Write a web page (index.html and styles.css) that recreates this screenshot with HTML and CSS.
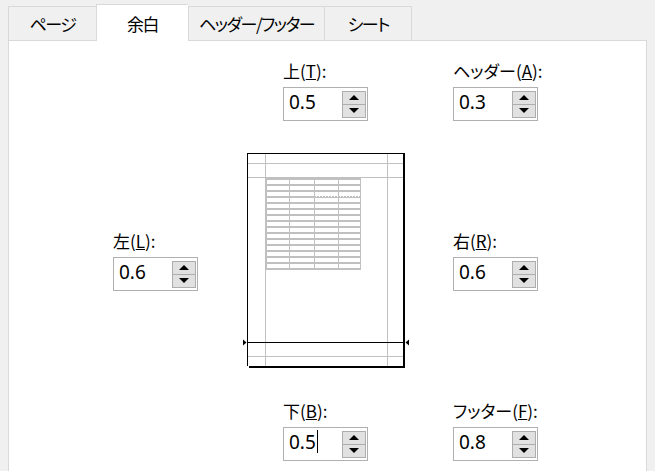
FILE: index.html
```html
<!DOCTYPE html>
<html lang="ja">
<head>
    <meta charset="UTF-8">
    <title>ページ設定 - 余白</title>
    <link rel="stylesheet" href="styles.css">
</head>
<body>
    <div class="tabs">
        <div class="tab">ページ</div>
        <div class="tab active">余白</div>
        <div class="tab">ヘッダー/フッター</div>
        <div class="tab">シート</div>
    </div>

    <div class="panel">
        <div class="margins">
            <div class="field f-top">
                <label class="cap">上(<u>T</u>):</label>
                <div class="spin">
                    <span class="val">0.5</span>
                    <span class="btns"><span class="btn up"></span><span class="btn down"></span></span>
                </div>
            </div>

            <div class="field f-header">
                <label class="cap">ヘッダー(<u>A</u>):</label>
                <div class="spin">
                    <span class="val">0.3</span>
                    <span class="btns"><span class="btn up"></span><span class="btn down"></span></span>
                </div>
            </div>

            <div class="field f-left">
                <label class="cap">左(<u>L</u>):</label>
                <div class="spin">
                    <span class="val">0.6</span>
                    <span class="btns"><span class="btn up"></span><span class="btn down"></span></span>
                </div>
            </div>

            <!-- page preview: margin guides, sample table, bottom margin highlighted -->
            <svg class="preview" width="172" height="222" viewBox="0 0 172 222">
                <rect x="7" y="3" width="157" height="214" fill="#fff"/>
                <g stroke="#c0c0c0" stroke-width="1">
                    <line x1="25.5" y1="4" x2="25.5" y2="216"/>
                    <line x1="147.5" y1="4" x2="147.5" y2="216"/>
                    <line x1="8" y1="13.5" x2="163" y2="13.5"/>
                    <line x1="8" y1="27.5" x2="163" y2="27.5"/>
                    <line x1="8" y1="206.5" x2="163" y2="206.5"/>
                </g>
                <g fill="#c0c0c0">
                    <rect x="26" y="28" width="95" height="2"/>
                    <rect x="26" y="34" width="95" height="2"/>
                    <rect x="26" y="40" width="95" height="2"/>
                    <rect x="26" y="46" width="95" height="2"/>
                    <rect x="26" y="52" width="95" height="2"/>
                    <rect x="26" y="58" width="95" height="2"/>
                    <rect x="26" y="64" width="95" height="2"/>
                    <rect x="26" y="70" width="95" height="2"/>
                    <rect x="26" y="76" width="95" height="2"/>
                    <rect x="26" y="82" width="95" height="2"/>
                    <rect x="26" y="88" width="95" height="2"/>
                    <rect x="26" y="94" width="95" height="2"/>
                    <rect x="26" y="100" width="95" height="2"/>
                    <rect x="26" y="106" width="95" height="2"/>
                    <rect x="26" y="112" width="95" height="2"/>
                    <rect x="26" y="118" width="95" height="2"/>
                    <rect x="26" y="28" width="1" height="92"/>
                    <rect x="49" y="28" width="1" height="92"/>
                    <rect x="74" y="28" width="1" height="92"/>
                    <rect x="98" y="28" width="1" height="92"/>
                    <rect x="120" y="28" width="1" height="92"/>
                </g>
                <line x1="76" y1="46.5" x2="121" y2="46.5" stroke="#fff" stroke-dasharray="1 2"/>
                <g fill="#000">
                    <rect x="7" y="3" width="1" height="213"/>
                    <rect x="7" y="3" width="158" height="1"/>
                    <rect x="163" y="3" width="2" height="215"/>
                    <rect x="9" y="216" width="156" height="2"/>
                    <rect x="7" y="192" width="158" height="1"/>
                    <polygon points="3,189.5 6.5,192.5 3,195.5"/>
                    <polygon points="169,189.5 165.5,192.5 169,195.5"/>
                </g>
            </svg>

            <div class="field f-right">
                <label class="cap">右(<u>R</u>):</label>
                <div class="spin">
                    <span class="val">0.6</span>
                    <span class="btns"><span class="btn up"></span><span class="btn down"></span></span>
                </div>
            </div>

            <div class="field f-bottom">
                <label class="cap">下(<u>B</u>):</label>
                <div class="spin">
                    <span class="val">0.5</span><span class="caret"></span>
                    <span class="btns"><span class="btn up"></span><span class="btn down"></span></span>
                </div>
            </div>

            <div class="field f-footer">
                <label class="cap">フッター(<u>F</u>):</label>
                <div class="spin">
                    <span class="val">0.8</span>
                    <span class="btns"><span class="btn up"></span><span class="btn down"></span></span>
                </div>
            </div>
        </div>
    </div>
</body>
</html>
```

FILE: styles.css
```css
body {
    margin: 0 8px;
    background: #f0f0f0;
    font-family: "Noto Sans CJK JP", sans-serif;
    color: #000;
    overflow: hidden;
}

/* tab strip */
.tabs {
    display: flex;
    align-items: flex-end;
    padding-top: 4px;
}

.tab {
    box-sizing: border-box;
    height: 34px;
    min-width: 88px;
    padding: 0 10px;
    display: flex;
    align-items: center;
    justify-content: center;
    border-top: 1px solid #d9d9d9;
    border-left: 1px solid #d9d9d9;
    background: #f0f0f0;
    font-size: 17px;
    font-feature-settings: "palt";
    letter-spacing: -1.5px;
    white-space: nowrap;
}

.tab:last-child {
    border-right: 1px solid #d9d9d9;
}

.tab.active {
    position: relative;
    z-index: 1;
    height: 37px;
    min-width: 92px;
    margin-bottom: -1px;
    background: #fff;
}

/* page body */
.panel {
    box-sizing: border-box;
    height: 440px;
    background: #fff;
    border: 1px solid #d9d9d9;
}

.margins {
    display: grid;
    grid-template-columns: repeat(3, 85px);
    column-gap: 85px;
    row-gap: 29px;
    padding: 20px 0 0 104px;
}

.f-top { grid-column: 2; grid-row: 1; }
.f-header { grid-column: 3; grid-row: 1; }
.f-left { grid-column: 1; grid-row: 2; align-self: center; }
.preview { grid-column: 2; grid-row: 2; justify-self: center; display: block; }
.f-right { grid-column: 3; grid-row: 2; align-self: center; }
.f-bottom { grid-column: 2; grid-row: 3; }
.f-footer { grid-column: 3; grid-row: 3; }

.cap {
    display: block;
    font-size: 17px;
    line-height: 20px;
    margin-bottom: 6px;
    white-space: nowrap;
    font-feature-settings: "palt";
}

/* spin box */
.spin {
    box-sizing: border-box;
    width: 85px;
    height: 34px;
    display: flex;
    align-items: center;
    padding: 0 1px 0 5px;
    border: 1px solid #b0b0b0;
    background: #fff;
}

.val {
    font-family: "Noto Sans", sans-serif;
    font-size: 19px;
    line-height: 20px;
    margin-bottom: 5px;
}

.caret {
    width: 1px;
    height: 23px;
    margin: 0 0 5px 1px;
    background: #000;
}

.btns {
    margin-left: auto;
    display: flex;
    flex-direction: column;
}

.btn {
    box-sizing: border-box;
    width: 24px;
    height: 14px;
    display: flex;
    align-items: center;
    justify-content: center;
    border: 1px solid #adadad;
    background: #e1e1e1;
}

.btn + .btn {
    margin-top: -1px;
}

.btn::before {
    content: "";
    border-left: 5px solid transparent;
    border-right: 5px solid transparent;
}

.up::before {
    border-bottom: 5px solid #000;
}

.down::before {
    border-top: 5px solid #000;
}
```
